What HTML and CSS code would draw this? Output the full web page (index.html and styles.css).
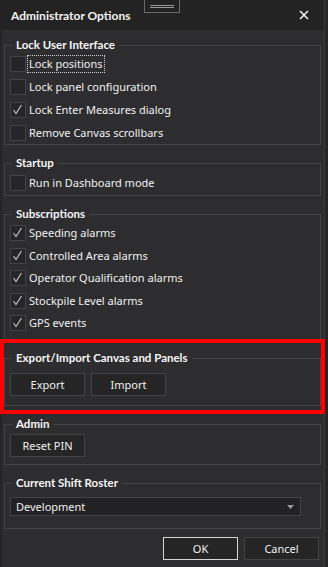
FILE: index.html
```html
<!DOCTYPE html>
<html>
<head>
<meta charset="utf-8">
<link rel="stylesheet" href="styles.css">
</head>
<body>
<div class="window">
  <div class="dialog">
    <header class="titlebar">
      <span class="title">Administrator Options</span>
      <span class="close"><svg width="10" height="10" viewBox="0 0 10 10"><path d="M1 1L9 9M9 1L1 9" stroke="#f1f1f1" stroke-width="1.6" fill="none"/></svg></span>
    </header>
    <div class="content">
      <fieldset class="group g-lock">
        <legend>Lock User Interface</legend>
        <div class="rows">
          <label class="check"><span class="box"></span><span class="text focus">Lock positions</span></label>
          <label class="check"><span class="box"></span><span class="text">Lock panel configuration</span></label>
          <label class="check"><span class="box on"><svg width="16" height="16" viewBox="0 0 16 16"><path d="M3.5 8L6 11.5L11.5 3" stroke="#c8c8c8" stroke-width="1.1" fill="none"/></svg></span><span class="text">Lock Enter Measures dialog</span></label>
          <label class="check"><span class="box"></span><span class="text">Remove Canvas scrollbars</span></label>
        </div>
      </fieldset>
      <fieldset class="group g-startup">
        <legend>Startup</legend>
        <div class="rows">
          <label class="check"><span class="box"></span><span class="text">Run in Dashboard mode</span></label>
        </div>
      </fieldset>
      <fieldset class="group g-subs">
        <legend>Subscriptions</legend>
        <div class="rows">
          <label class="check"><span class="box on"><svg width="16" height="16" viewBox="0 0 16 16"><path d="M3.5 8L6 11.5L11.5 3" stroke="#c8c8c8" stroke-width="1.1" fill="none"/></svg></span><span class="text">Speeding alarms</span></label>
          <label class="check"><span class="box on"><svg width="16" height="16" viewBox="0 0 16 16"><path d="M3.5 8L6 11.5L11.5 3" stroke="#c8c8c8" stroke-width="1.1" fill="none"/></svg></span><span class="text">Controlled Area alarms</span></label>
          <label class="check"><span class="box on"><svg width="16" height="16" viewBox="0 0 16 16"><path d="M3.5 8L6 11.5L11.5 3" stroke="#c8c8c8" stroke-width="1.1" fill="none"/></svg></span><span class="text">Operator Qualification alarms</span></label>
          <label class="check"><span class="box on"><svg width="16" height="16" viewBox="0 0 16 16"><path d="M3.5 8L6 11.5L11.5 3" stroke="#c8c8c8" stroke-width="1.1" fill="none"/></svg></span><span class="text">Stockpile Level alarms</span></label>
          <label class="check"><span class="box on"><svg width="16" height="16" viewBox="0 0 16 16"><path d="M3.5 8L6 11.5L11.5 3" stroke="#c8c8c8" stroke-width="1.1" fill="none"/></svg></span><span class="text">GPS events</span></label>
        </div>
      </fieldset>
      <fieldset class="group g-export">
        <legend>Export/Import Canvas and Panels</legend>
        <div class="buttons">
          <button class="btn">Export</button>
          <button class="btn">Import</button>
        </div>
      </fieldset>
      <fieldset class="group g-admin">
        <legend>Admin</legend>
        <div class="buttons">
          <button class="btn">Reset PIN</button>
        </div>
      </fieldset>
      <fieldset class="group g-roster">
        <legend>Current Shift Roster</legend>
        <div class="select">
          <span class="select-text">Development</span>
          <svg class="arrow" width="7" height="4" viewBox="0 0 7 4"><path d="M0 0H7L3.5 4Z" fill="#9a9a9a"/></svg>
        </div>
      </fieldset>
      <div class="actions">
        <button class="btn default">OK</button>
        <button class="btn">Cancel</button>
      </div>
    </div>
  </div>
  <div class="edge"></div>
  <div class="grip"><span></span><span></span></div>
  <div class="highlight"></div>
</div>
</body>
</html>
```

FILE: styles.css
```css
* { box-sizing: border-box; }
html, body { margin: 0; padding: 0; }
body {
  width: 328px;
  height: 567px;
  overflow: hidden;
  background: #252526;
  font-family: "Noto Sans", "Open Sans", sans-serif;
  font-size: 11px;
  color: #f1f1f1;
}
.window {
  position: relative;
  display: flex;
  width: 328px;
  height: 567px;
}
.dialog {
  width: 324px;
  display: flex;
  flex-direction: column;
}
.titlebar {
  height: 30px;
  background: #232323;
  display: flex;
  align-items: center;
  justify-content: space-between;
  padding: 0 15px 0 11px;
}
.title {
  font-family: Lato, "Noto Sans", sans-serif;
  font-weight: 700;
  font-size: 12px;
  color: #f4f4f4;
}
.close { display: flex; }
.content {
  flex: 1;
  background: #2d2d30;
  border-left: 2px solid #262628;
  padding: 7px 3px 0 2px;
  display: flex;
  flex-direction: column;
}
.group {
  margin: 0;
  border: 1px solid #434346;
  padding: 0 5px;
  min-width: 0;
}
.group + .group { margin-top: 10px; }
.group legend {
  margin-left: 2px;
  padding: 0 4px;
  font-family: Lato, "Noto Sans", sans-serif;
  font-weight: 700;
  font-size: 11.5px;
  line-height: 16px;
  color: #f6f6f6;
}
.rows {
  display: flex;
  flex-direction: column;
  gap: 7px;
}
.check {
  display: flex;
  align-items: center;
  height: 16px;
}
.box {
  width: 16px;
  height: 16px;
  border: 1px solid #434346;
  background: #262628;
  display: flex;
  align-items: center;
  justify-content: center;
  flex: none;
}
.box svg { display: block; margin: -1px; }
.text {
  margin-left: 3px;
  line-height: 16px;
  white-space: nowrap;
}
.focus {
  outline: 1px dotted #d0d0d0;
  outline-offset: 0;
  padding: 0 1px;
  margin-left: 2px;
}
.g-lock { padding-top: 3px; padding-bottom: 3px; }
.g-startup { padding-top: 4px; padding-bottom: 4px; }
.g-subs { padding-top: 3px; padding-bottom: 8px; }
.g-subs .rows { gap: 6.5px; }
.g-export { padding-top: 7px; padding-bottom: 9px; }
.g-admin { padding-top: 2px; padding-bottom: 7px; }
.g-roster { padding-top: 6px; padding-bottom: 12px; }
.buttons {
  display: flex;
  gap: 6px;
}
.btn {
  width: 75px;
  height: 23px;
  background: #252526;
  border: 1px solid #434346;
  color: #f1f1f1;
  font-family: inherit;
  font-size: 11px;
  padding: 0;
}
.btn.default { border-color: #d6d6d6; }
.select {
  width: 291px;
  height: 19px;
  background: #222224;
  border: 1px solid #434346;
  display: flex;
  align-items: center;
  justify-content: space-between;
  padding: 0 6px 0 5px;
}
.select-text { line-height: 16px; }
.arrow { display: block; }
.actions {
  margin-top: 8px;
  display: flex;
  justify-content: flex-end;
  gap: 6px;
  padding-right: 2px;
}
.edge {
  width: 4px;
  background: #252526;
  border-left: 1px solid #3a3a3d;
}
.grip {
  position: absolute;
  left: 144px;
  top: -1px;
  width: 36px;
  height: 14px;
  border: 1px solid #6a6a6a;
  background: #222;
  display: flex;
  flex-direction: column;
  align-items: center;
  justify-content: center;
  gap: 1px;
}
.grip span {
  width: 24px;
  height: 1px;
  background: #9a9a9a;
}
.highlight {
  position: absolute;
  left: 0;
  top: 339px;
  width: 325px;
  height: 75px;
  border: 4px solid #ff0000;
}
```
